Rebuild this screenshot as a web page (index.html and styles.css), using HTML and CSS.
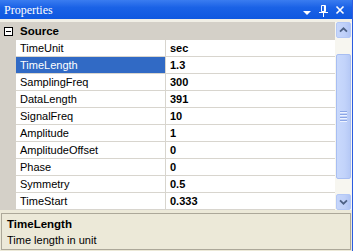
FILE: index.html
```html
<!DOCTYPE html>
<html>
<head>
<meta charset="utf-8">
<link rel="stylesheet" href="styles.css">
</head>
<body>
<div class="window">
  <div class="titlebar">
    <span class="title">Properties</span>
    <div class="tbtns">
      <svg class="ico" width="10" height="16" viewBox="0 0 10 16"><path d="M1 9h8l-4 4z" fill="#fff"/></svg>
      <svg class="ico" width="11" height="16" viewBox="0 0 11 16"><path d="M3.5 3.5h4v6h-4z" fill="none" stroke="#fff"/><path d="M6.5 3v7" stroke="#fff" stroke-width="1.2"/><path d="M1 10.5h9" stroke="#fff"/><path d="M5.5 11v4" stroke="#fff"/></svg>
      <svg class="ico" width="11" height="16" viewBox="0 0 11 16"><path d="M1.5 4.5l7 7M8.5 4.5l-7 7" stroke="#fff" stroke-width="1.6"/></svg>
    </div>
  </div>
  <div class="sep"></div>
  <div class="gridwrap">
    <div class="grid">
      <div class="cat">
        <span class="gutter"><span class="expander"></span></span>
        <span class="catname">Source</span>
      </div>
      <div class="row"><span class="gutter"></span><span class="name">TimeUnit</span><span class="val">sec</span></div>
      <div class="row sel"><span class="gutter"></span><span class="name">TimeLength</span><span class="val">1.3</span></div>
      <div class="row"><span class="gutter"></span><span class="name">SamplingFreq</span><span class="val">300</span></div>
      <div class="row"><span class="gutter"></span><span class="name">DataLength</span><span class="val">391</span></div>
      <div class="row"><span class="gutter"></span><span class="name">SignalFreq</span><span class="val">10</span></div>
      <div class="row"><span class="gutter"></span><span class="name">Amplitude</span><span class="val">1</span></div>
      <div class="row"><span class="gutter"></span><span class="name">AmplitudeOffset</span><span class="val">0</span></div>
      <div class="row"><span class="gutter"></span><span class="name">Phase</span><span class="val">0</span></div>
      <div class="row"><span class="gutter"></span><span class="name">Symmetry</span><span class="val">0.5</span></div>
      <div class="row"><span class="gutter"></span><span class="name">TimeStart</span><span class="val">0.333</span></div>
    </div>
    <div class="scrollbar">
      <div class="sbtn"><svg width="15" height="14" viewBox="0 0 15 14"><path d="M3.5 9l4-4 4 4" fill="none" stroke="#4D6185" stroke-width="2"/></svg></div>
      <div class="track"><div class="thumb"><span class="grip"></span><span class="grip"></span><span class="grip"></span><span class="grip"></span></div></div>
      <div class="sbtn"><svg width="15" height="14" viewBox="0 0 15 14"><path d="M3.5 5l4 4 4-4" fill="none" stroke="#4D6185" stroke-width="2"/></svg></div>
    </div>
  </div>
  <div class="desc">
    <div class="dtitle">TimeLength</div>
    <div class="dtext">Time length in unit</div>
  </div>
</div>
</body>
</html>
```

FILE: styles.css
```css
html, body {
  margin: 0;
  padding: 0;
  background: #ECE9D8;
}
body {
  width: 353px;
  height: 251px;
  overflow: hidden;
  font-family: "Liberation Sans", Arial, sans-serif;
  font-size: 11px;
  color: #000;
}
.window {
  width: 352px;
  height: 251px;
  border-right: 1px solid #2B5CE0;
  display: flex;
  flex-direction: column;
}
.titlebar {
  height: 19px;
  background: linear-gradient(#3A7CF0, #1A62E6 40%, #0F58E0);
  display: flex;
  align-items: center;
  justify-content: space-between;
  color: #fff;
}
.title {
  font-family: "Liberation Serif", "Times New Roman", serif;
  font-size: 12px;
  padding-left: 4px;
  padding-top: 1px;
}
.tbtns {
  display: flex;
  align-items: center;
  gap: 6px;
  padding-right: 6px;
}
.ico { display: block; }
.sep {
  height: 3px;
  background: #F1EFE6;
}
.gridwrap {
  display: flex;
  height: 188px;
  background: #fff;
}
.grid {
  flex: 1;
  display: flex;
  flex-direction: column;
}
.cat {
  height: 18px;
  background: #D4D0C8;
  display: flex;
  align-items: center;
}
.gutter {
  width: 16px;
  flex: none;
  align-self: stretch;
  background: #D4D0C8;
  display: flex;
  align-items: center;
  justify-content: center;
}
.expander {
  width: 7px;
  height: 7px;
  border: 1px solid #000;
  background: #fff;
  position: relative;
  margin-left: 1px;
}
.expander::after {
  content: "";
  position: absolute;
  left: 1px;
  top: 3px;
  width: 5px;
  height: 1px;
  background: #000;
}
.catname {
  font-weight: bold;
  padding-left: 4px;
  font-size: 11.5px;
}
.row {
  height: 17px;
  display: flex;
}
.name {
  width: 150px;
  flex: none;
  padding-left: 4px;
  box-sizing: border-box;
  border-bottom: 1px solid #D8D5CE;
  border-right: 1px solid #D8D5CE;
  line-height: 16px;
  white-space: nowrap;
}
.val {
  flex: 1;
  padding-left: 4px;
  font-weight: bold;
  border-bottom: 1px solid #D8D5CE;
  line-height: 16px;
}
.sel .name {
  background: #316AC5;
  color: #fff;
}
.scrollbar {
  width: 17px;
  flex: none;
  display: flex;
  flex-direction: column;
  background: #F7F6F0;
}
.sbtn {
  height: 16px;
  margin: 0 1px;
  border: 1px solid #B4C8F6;
  border-radius: 2px;
  box-sizing: border-box;
  background: linear-gradient(90deg, #C6D6FB, #BFD0F8 60%, #B0C4F4);
  display: flex;
  align-items: center;
  justify-content: center;
}
.sbtn svg { display: block; }
.track {
  flex: 1;
  padding-top: 16px;
  box-sizing: border-box;
}
.thumb {
  height: 125px;
  margin: 0 1px;
  box-sizing: border-box;
  border: 1px solid #A8BEF2;
  border-radius: 2px;
  background: linear-gradient(90deg, #C9D9FC, #C2D3FA 60%, #B6C9F6);
  display: flex;
  flex-direction: column;
  align-items: center;
  justify-content: center;
  gap: 1px;
}
.grip {
  width: 7px;
  height: 1px;
  background: #8CA6E6;
  border-bottom: 1px solid #EEF3FF;
}
.desc {
  margin: 3px 0 0 1px;
  height: 37px;
  border: 1px solid #ACA899;
  background: #ECE9D8;
  padding: 3px 0 0 5px;
  box-sizing: border-box;
  width: 350px;
}
.dtitle {
  font-weight: bold;
  font-size: 11.5px;
  line-height: 15px;
}
.dtext {
  line-height: 16px;
}
```
